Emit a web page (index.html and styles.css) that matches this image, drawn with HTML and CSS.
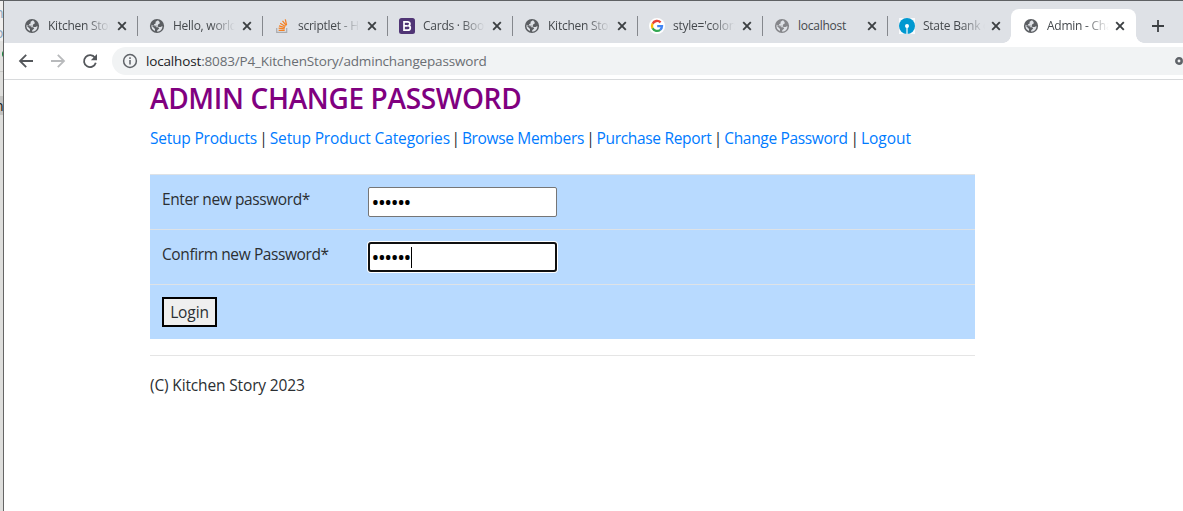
FILE: index.html
```
<!DOCTYPE html>
<html lang="en">
<head>
<meta charset="utf-8">
<title>Admin - Change Password</title>
<link rel="stylesheet" href="styles.css">
</head>
<body>
<svg class="defs" aria-hidden="true">
  <symbol id="globe" viewBox="0 0 16 16"><circle cx="8" cy="8" r="7.1" fill="currentColor"/><path class="land" d="M9 2.300 6.600 3.700v1.800L5 6.300l.4 1.500h3.200l.8 1.100 2.200.1 1.800-1c.2 3.200-2 5.600-5.200 5.700v-1.400l2-1.700-1-1.400H7.400L6.200 8.600 2.500 6.800c-.5 3 .9 5.300 3.500 6.300v-2.200L4.300 9.300 2.500 7.400l3.700 1.200 2.700-.7.2-1.500 1.800-1.100-.5-1.600z"/></symbol>
  <symbol id="close" viewBox="0 0 10 10"><path d="m1.2 1.2 7.6 7.6m0-7.6L1.2 8.8" fill="none" stroke="#3c4043" stroke-width="1.9"/></symbol>
</svg>
<div class="window">
  <aside class="behind"><span class="frag f1">n</span><span class="frag f2">o</span><i class="green"></i><span class="frag f3">n</span></aside>
  <main class="browser">
    <div class="tabs">
      <div class="tab"><svg class="icon"><use href="#globe"/></svg><span class="label fade">Kitchen Story</span><svg class="x"><use href="#close"/></svg></div>
      <div class="tab"><svg class="icon"><use href="#globe"/></svg><span class="label fade">Hello, world!</span><svg class="x"><use href="#close"/></svg></div>
      <div class="tab"><svg class="icon" viewBox="0 0 16 16" fill="none"><path d="M2.7 10v4.3h10V10" stroke="#aaabae" stroke-width="1.2"/><path d="M4.6 12.3h6.1M4.6 10.2l6.1.7M5 7.8l5.9 1.9M6.2 5.2l5.2 3.3M8.5 2.8l3.8 4.8M11.3 1.3l1.3 5.8" stroke="#f48024" stroke-width="1.25"/></svg><span class="label fade">scriptlet - How</span><svg class="x"><use href="#close"/></svg></div>
      <div class="tab"><svg class="icon" viewBox="0 0 16 16"><rect width="16" height="16" rx="2.5" fill="#503575"/><path d="M5 3.8h3.6c3 0 3 3.5.6 3.9 3 .4 2.8 4.5-.6 4.5H5zM5 7.8h3.8" fill="none" stroke="#fff" stroke-width="1.7"/></svg><span class="label fade">Cards · Bootstrap</span><svg class="x"><use href="#close"/></svg></div>
      <div class="tab"><svg class="icon"><use href="#globe"/></svg><span class="label fade">Kitchen Story</span><svg class="x"><use href="#close"/></svg></div>
      <div class="tab"><svg class="icon" viewBox="0 0 16 16" fill="none" stroke-width="2.3"><circle cx="8" cy="8" r="8" fill="#fff"/><path d="M11.6 4.4A5 5 0 0 0 3.6 5.7" stroke="#ea4335"/><path d="M3.6 5.6a5 5 0 0 0 0 4.8" stroke="#fbbc05"/><path d="M3.6 10.3a5 5 0 0 0 7.6 1.5" stroke="#34a853"/><path d="M11.2 11.8A5 5 0 0 0 13 8.1H8.2" stroke="#4285f4"/></svg><span class="label fade">style='color:red'</span><svg class="x"><use href="#close"/></svg></div>
      <div class="tab"><svg class="icon grey"><use href="#globe"/></svg><span class="label">localhost</span><svg class="x"><use href="#close"/></svg></div>
      <div class="tab bank"><svg class="icon" viewBox="0 0 16 16"><path fill="#f7f9fb" d="M0 0h16v16H0z"/><circle cx="8" cy="8" r="8" fill="#0098d0"/><circle cx="8" cy="8" r="2" fill="#fff"/><path d="M7.4 8h1.2v8H7.4z" fill="#fff"/></svg><span class="label fade">State Bank of</span><svg class="x"><use href="#close"/></svg></div>
      <div class="tab active"><svg class="icon"><use href="#globe"/></svg><span class="label fade">Admin - Change</span><svg class="x"><use href="#close"/></svg></div>
      <svg class="plus" viewBox="0 0 12 12"><path d="M6 0v12M0 6h12" stroke="#3c4043" stroke-width="1.8"/></svg>
    </div>
    <div class="toolbar">
      <svg class="nav" viewBox="0 0 16 16"><path d="M15 8H2m6.2-6.2L2 8l6.2 6.2" /></svg>
      <svg class="nav off" viewBox="0 0 16 16"><path d="M1 8h13M7.8 1.8 14 8l-6.2 6.2"/></svg>
      <svg class="nav" viewBox="0 0 16 16"><path d="M13 4.7A6 6 0 1 0 13.8 9.8"/><path class="solid" d="M15 1v6.2H8.8z"/></svg>
      <div class="address">
        <svg class="info" viewBox="0 0 16 16"><circle cx="8" cy="8" r="6.4"/><path d="M8 7v4.5M8 4.3V6"/></svg>
        <span class="url"><b>localhost</b>:8083/P4_KitchenStory/adminchangepassword</span>
        <svg class="key" viewBox="0 0 8 8"><circle cx="4" cy="4" r="2.7"/></svg>
      </div>
    </div>
    <div class="page">
      <h1>ADMIN CHANGE PASSWORD</h1>
      <nav class="links"><a class="l1">Setup Products</a><span>|</span><a class="l2">Setup Product Categories</a><span>|</span><a class="l3">Browse Members</a><span>|</span><a class="l4">Purchase Report</a><span>|</span><a class="l5">Change Password</a><span>|</span><a class="l6">Logout</a></nav>
      <form class="form">
        <div class="row"><label>Enter new password*</label><div class="field">••••••</div></div>
        <div class="row"><label>Confirm new Password*</label><div class="field focus">••••••<i class="caret"></i></div></div>
        <div class="row"><button type="button">Login</button></div>
      </form>
      <footer>(C) Kitchen Story 2023</footer>
    </div>
  </main>
</div>
</body>
</html>
```
FILE: styles.css
```
* { box-sizing: border-box; }
body { margin: 0; overflow: hidden; background: #fff; color: #2b2f33; font: 15.5px/24px "Open Sans", "Noto Sans", sans-serif; }
.defs { position: absolute; width: 0; height: 0; }
.window { display: flex; width: 1183px; height: 511px; border-top: 1px solid #5f6164; }
.behind { position: relative; flex: 0 0 4px; overflow: hidden; border-right: 1px solid #656565; background: linear-gradient(#f0efee 0 40px, #e2e2e0 40px 70px, #c8c8c6 70px 71px, #dededc 71px 95px, #c3c3c1 95px 114px, #dededc 114px); }
.frag { position: absolute; left: -5px; font-size: 14px; line-height: 14px; color: #8aa5bd; }
.f1 { top: 5px; }
.f2 { top: 25px; }
.f3 { top: 98px; color: #111; }
.green { position: absolute; left: 2px; top: 49px; width: 8px; height: 8px; border-radius: 50%; background: #16803a; }
.browser { flex: 1; min-width: 0; }
.tabs { display: flex; height: 42px; padding: 8px 0 0 9px; background: #dee1e6; }
.tab { position: relative; display: flex; align-items: center; flex: 0 0 125px; height: 34px; padding-left: 11px; }
.tab:not(.active):not(.bank)::after { content: ""; position: absolute; right: 0; top: 7px; width: 1px; height: 20px; background: #85888d; }
.icon { flex: none; width: 16px; height: 16px; color: #5b5e62; }
.grey { color: #85868a; }
.land { fill: #dee1e6; }
.label { flex: none; width: 62px; height: 20px; margin-left: 8px; overflow: hidden; white-space: nowrap; font-size: 12px; line-height: 19px; letter-spacing: -.25px; color: #45494d; }
.fade { -webkit-mask-image: linear-gradient(90deg, #000 38px, transparent 62px); mask-image: linear-gradient(90deg, #000 38px, transparent 62px); }
.x { flex: none; width: 10px; height: 10px; margin-left: 7px; }
.bank { flex-basis: 123px; }
.bank .x { margin-left: 6px; }
.active { flex-basis: 125px; padding-left: 12px; background: #fff; border-radius: 8px 8px 0 0; }
.active .x { margin-left: 6px; }
.active::before, .active::after { content: ""; position: absolute; bottom: 0; width: 8px; height: 8px; }
.active::before { left: -8px; background: radial-gradient(circle at 0 0, transparent 7.5px, #fff 8px); }
.active::after { right: -8px; background: radial-gradient(circle at 100% 0, transparent 7.5px, #fff 8px); }
.plus { width: 12px; height: 12px; margin: 11px 0 0 16px; }
.toolbar { display: flex; align-items: center; height: 37px; padding: 0 0 1px 14px; border-bottom: 1px solid #d8dadc; }
.nav { flex: none; width: 16px; height: 16px; margin-right: 16px; fill: none; stroke: #54575b; stroke-width: 1.8; }
.nav + .nav + .nav { margin-right: 14px; }
.off { stroke: #b8babc; }
.solid { fill: #54575b; stroke: none; }
.address { display: flex; align-items: center; flex: 1; height: 28px; padding-left: 10px; border-radius: 14px 0 0 14px; background: #f1f3f4; }
.info { flex: none; width: 16px; height: 16px; fill: none; stroke: #5f6368; stroke-width: 1.5; }
.url { margin-left: 8px; font-size: 13.5px; line-height: 26px; letter-spacing: -.16px; color: #6a6e73; }
.url b { font-weight: inherit; color: #202124; }
.key { width: 8px; height: 8px; margin-left: auto; fill: none; stroke: #5f6368; stroke-width: 2.5; }
.page { padding-left: 146px; }
h1 { margin: 0; height: 46px; font-size: 28px; font-weight: 600; line-height: 36px; letter-spacing: -.34px; white-space: nowrap; color: #800080; }
.links { display: flex; height: 48px; line-height: 25px; white-space: nowrap; letter-spacing: -.33px; }
.links a { flex: none; color: #007bff; }
.links span { flex: none; width: 12.7px; text-align: center; }
.l1 { width: 107px; letter-spacing: -.22px; }
.l2 { width: 179.5px; letter-spacing: -.13px; }
.l3 { width: 122px; }
.l4 { width: 115px; }
.l5 { width: 124px; }
.l6 { width: 50px; letter-spacing: 0; }
.form { width: 825px; background: #b8daff; }
.row { display: flex; height: 55px; padding: 12px; border-top: 1px solid #dee2e6; }
label { width: 206px; line-height: 25px; letter-spacing: -.4px; white-space: nowrap; }
.field { display: flex; align-items: center; width: 189px; height: 30px; padding-left: 3px; border: 1px solid #767676; border-radius: 2px; background: #fff; color: #000; font-size: 18px; font-weight: 600; line-height: 28px; letter-spacing: -.35px; }
.focus { padding-left: 2px; border: 2px solid #101010; border-radius: 3px; box-shadow: 0 0 0 1px #fff; }
.caret { width: 1px; height: 21px; background: #000; }
button { width: 55px; height: 30px; padding: 0; border: 2px solid #000; background: #efefef; color: #2b2f33; font: inherit; letter-spacing: -.1px; }
footer { width: 825px; margin-top: 16px; padding-top: 17px; border-top: 1px solid #e5e5e5; letter-spacing: -.15px; }
```
